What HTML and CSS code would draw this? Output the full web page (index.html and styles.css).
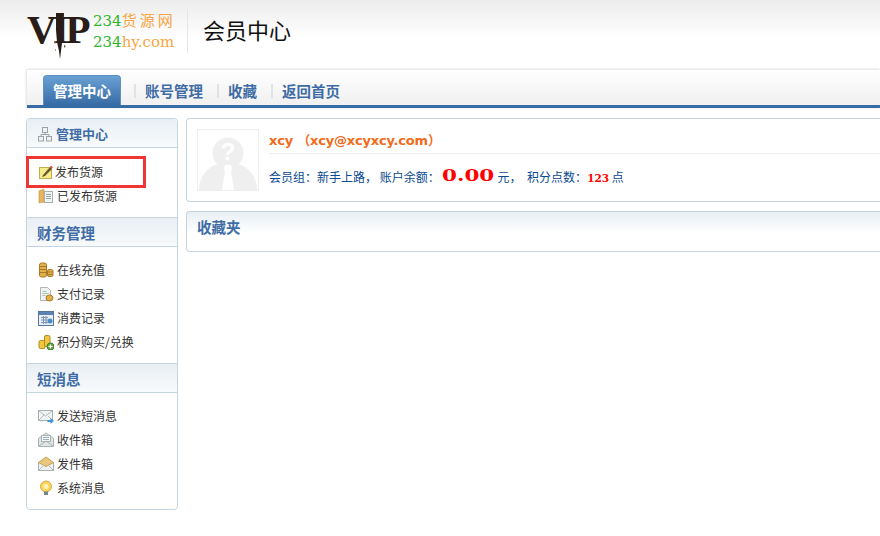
FILE: index.html
```html
<!DOCTYPE html>
<html lang="zh">
<head>
<meta charset="utf-8">
<title>会员中心</title>
<link rel="stylesheet" href="styles.css">
</head>
<body>
<header class="top">
  <div class="logo">
    <span class="vip">VIP</span>
    <svg class="vip-stem" viewBox="0 0 12 48" width="12" height="48"><path d="M2 2h8l-1 24-1 6-1 8-1 8-1-8-2-9-1-12z" fill="#2a1c18"/><path d="M0 30l2 1-1 2zM10 34l2 1-2 2zM1 38l1 1-1 1z" fill="#6b5a52"/></svg>
    <div class="site">
      <div class="site-a"><span class="green">234</span><span class="orange wide">货源网</span></div>
      <div class="site-b"><span class="green">234</span><span class="orange">hy.com</span></div>
    </div>
  </div>
  <h1 class="title">会员中心</h1>
</header>

<nav class="tabs">
  <a class="tab active">管理中心</a>
  <span class="sep"></span><a class="tab">账号管理</a>
  <span class="sep"></span><a class="tab">收藏</a>
  <span class="sep"></span><a class="tab">返回首页</a>
</nav>

<div class="layout">
  <aside class="side">
    <div class="side-head first">
      <svg class="hicon" viewBox="0 0 16 16" width="16" height="16"><g fill="#eef1f3" stroke="#9aa3a8"><rect x="5.500" y="1.500" width="5" height="5"/><rect x="1.500" y="10.500" width="5" height="4.500"/><rect x="9.500" y="10.500" width="5" height="4.500"/><path d="M8 6.500v2M4 10.500v-2h8v2" fill="none"/></g></svg>
      管理中心
    </div>
    <ul class="menu tight">
      <li>
        <svg class="ico" viewBox="0 0 16 16" width="16" height="16"><rect x="1.500" y="3.500" width="12" height="11" fill="#f6ec8c" stroke="#c2ad50"/><path d="M5 11l7-8 2 2-7 7-3 1z" fill="#6b5a2a"/><path d="M12 3l1-1.500 2 2-1 1z" fill="#e0524a"/></svg>
        发布货源
      </li>
      <li>
        <svg class="ico" viewBox="0 0 16 16" width="16" height="16"><path d="M1 3l5-2v13l-5 1z" fill="#e5b65c" stroke="#c59340" stroke-width=".6"/><rect x="6.500" y="3.500" width="8" height="11" fill="#f2f4f4" stroke="#a9b0b4"/><path d="M8 6.500h5M8 8.500h5M8 10.500h5" stroke="#99a3a8"/></svg>
        已发布货源
      </li>
    </ul>

    <div class="side-head">财务管理</div>
    <ul class="menu">
      <li>
        <svg class="ico" viewBox="0 0 16 16" width="16" height="16"><rect x="1.500" y="1" width="7" height="14" rx="2" fill="#e2b04a" stroke="#a87a26"/><path d="M2 4.500h6M2 7.500h6M2 10.500h6" stroke="#a87a26"/><rect x="9.500" y="7.500" width="5.500" height="7" rx="1.500" fill="#e2b04a" stroke="#a87a26"/><path d="M10 10h4.500M10 12.500h4.500" stroke="#a87a26"/></svg>
        在线充值
      </li>
      <li>
        <svg class="ico" viewBox="0 0 16 16" width="16" height="16"><path d="M2.500 1.500h7l3 3v10h-10z" fill="#eef2f1" stroke="#aeb8ba"/><path d="M4.500 5.500h4M4.500 7.500h6M4.500 9.500h3" stroke="#a9c2b6"/><ellipse cx="11.500" cy="12" rx="3.500" ry="3" fill="#e2b04a" stroke="#a87a26"/></svg>
        支付记录
      </li>
      <li>
        <svg class="ico" viewBox="0 0 16 16" width="16" height="16"><rect x=".5" y="1.500" width="15" height="14" fill="#e8eef4" stroke="#56779c"/><rect x="1" y="2" width="14" height="3" fill="#5b84b5"/><path d="M3 7.500h7M3 10h7M3 12.500h7M5.500 6v8M8 6v8" stroke="#7f95ad"/><circle cx="12" cy="11" r="2.500" fill="#4b8cc4"/></svg>
        消费记录
      </li>
      <li>
        <svg class="ico" viewBox="0 0 16 16" width="16" height="16"><rect x="1" y="6.500" width="6" height="8" rx="1.500" fill="#f0c840" stroke="#b08a20"/><rect x="6.500" y="1.500" width="5.500" height="11" rx="1.500" fill="#f0c840" stroke="#b08a20"/><circle cx="12.500" cy="12.500" r="3.500" fill="#6aa84f" stroke="#3f7a30"/><path d="M12.500 10.500v4M10.500 12.500h4" stroke="#fff"/></svg>
        积分购买/兑换
      </li>
    </ul>

    <div class="side-head">短消息</div>
    <ul class="menu">
      <li>
        <svg class="ico" viewBox="0 0 16 16" width="16" height="16"><rect x=".5" y="2.500" width="14" height="10" fill="#f0f3f3" stroke="#a8b2b2"/><path d="M1 3l6.500 5L14 3M1 12l5-5M14 12l-4-4" fill="none" stroke="#b4bdbd"/><path d="M9.500 12h3v-2l3.500 3-3.500 3v-2h-3z" fill="#3f93d6"/></svg>
        发送短消息
      </li>
      <li>
        <svg class="ico" viewBox="0 0 16 16" width="16" height="16"><path d="M.5 6.500v8h15v-8L8 1z" fill="#dfe6e4" stroke="#a8b2b2"/><rect x="3.500" y="3.500" width="9" height="6" fill="#f6f8f8" stroke="#a8b2b2"/><path d="M5 5.500h6M5 7.500h6" stroke="#9bb0bb"/><path d="M1 14l7-5 7 5" fill="none" stroke="#a8b2b2"/></svg>
        收件箱
      </li>
      <li>
        <svg class="ico" viewBox="0 0 16 16" width="16" height="16"><rect x=".5" y="6.500" width="15" height="8" fill="#eef1f1" stroke="#a8b2b2"/><path d="M.5 6.500L8 1l7.500 5.500L8 10.500z" fill="#e9c77f" stroke="#c9a050"/><path d="M1 14l5-5M15 14l-5-5" stroke="#b4bdbd"/></svg>
        发件箱
      </li>
      <li>
        <svg class="ico" viewBox="0 0 16 16" width="16" height="16"><circle cx="8" cy="6.500" r="5.500" fill="#fbd65c" stroke="#d9a94a"/><circle cx="8" cy="6.500" r="2.500" fill="#fff3b8"/><rect x="6" y="11.500" width="4" height="3.500" fill="#7d8487"/></svg>
        系统消息
      </li>
    </ul>
  </aside>

  <main class="main">
    <section class="panel profile">
      <div class="avatar">
        <svg viewBox="0 0 60 60" width="60" height="60"><circle cx="30" cy="23" r="15.500" fill="#efefef"/><path d="M1 60c0-16 12-25 20-26h18c8 1 20 10 20 26z" fill="#efefef"/><path d="M27 35h6l1 3-1 4 3 18H24l3-18-1-4z" fill="#fff"/><text x="30" y="30" class="qmark">?</text></svg>
      </div>
      <div class="info">
        <div class="name">xcy （xcy@xcyxcy.com）</div>
        <div class="stats">会员组：新手上路， 账户余额：<b class="money">0.00</b> <span class="unit">元，</span> 积分点数：<b class="points">123</b> 点</div>
      </div>
    </section>
    <section class="panel fav">收藏夹</section>
  </main>
</div>

<div class="highlight"></div>
</body>
</html>
```

FILE: styles.css
```css
* { box-sizing: border-box; }
html, body { margin: 0; padding: 0; background: #fff; }
body {
  height: 536px;
  position: relative;
  font: 12px/16px "Noto Sans CJK SC", "Liberation Sans", sans-serif;
  color: #333;
}

/* header */
.top {
  height: 70px;
  padding: 10px 0 0 27px;
  display: flex;
  align-items: flex-start;
  background: linear-gradient(#ececec, #fff 55%);
}
.logo {
  position: relative;
  display: flex;
  width: 161px;
  height: 44px;
  border-right: 1px solid #e6e6e6;
  margin-top: -1px;
}
.vip {
  font: bold 41px/40px "Liberation Serif", serif;
  color: #2a1c18;
  letter-spacing: -3.500px;
  width: 66px;
  flex: none;
}
.vip-stem { position: absolute; left: 27px; top: 2px; }
.site { font-family: "DejaVu Serif", serif; font-size: 15px; line-height: 20px; padding-top: 1px; }
.site-b { margin-top: 1px; }
.green { color: #2fb52c; }
.orange { color: #f7a544; }
.wide { letter-spacing: 3px; font-family: "Noto Sans CJK SC", sans-serif; font-size: 15px; }
.title {
  margin: 5px 0 0 15px;
  font-size: 22px;
  line-height: 28px;
  font-weight: 400;
  color: #111;
}

/* tabs */
.tabs {
  margin-left: 27px;
  height: 38px;
  padding: 5px 0 0 16px;
  display: flex;
  align-items: flex-start;
  background: linear-gradient(#fff, #f0f0f0);
  border-bottom: 3px solid #376ba5;
  box-shadow: 0 -1px 2px #e4e4e4, -1px 0 2px #e4e4e4;
}
.tab {
  display: block;
  height: 30px;
  padding: 0 14px 0 9px;
  font-size: 14.500px;
  font-weight: 700;
  line-height: 31px;
  color: #3f6ca5;
}
.tab.active {
  width: 78px;
  padding: 0;
  text-align: center;
  color: #fff;
  background: linear-gradient(#69a1d4, #376ba5);
  border: 1px solid #5d90c4;
  border-bottom: 0;
  border-radius: 4px 4px 0 0;
  line-height: 29px;
  margin-right: 13px;
}
.sep { width: 2px; height: 14px; margin-top: 9px; background: #e2e2e2; }

/* layout */
.layout {
  display: flex;
  gap: 8px;
  margin: 10px 0 0 26px;
  align-items: flex-start;
}

/* side */
.side {
  width: 152px;
  height: 392px;
  flex: none;
  border: 1px solid #c5d5e0;
  border-radius: 4px;
  background: #fff;
}
.side-head {
  height: 30px;
  padding: 1px 0 0 10px;
  display: flex;
  align-items: center;
  gap: 3px;
  font-size: 14.500px;
  font-weight: 700;
  color: #3f6ca5;
  background: linear-gradient(#e8eff4, #f8fafb);
  border-top: 1px solid #c5d5e0;
  border-bottom: 1px solid #c5d5e0;
}
.side-head.first { border-top: 0; border-radius: 3px 3px 0 0; height: 29px; font-size: 13px; }
.hicon { flex: none; }
.menu { list-style: none; margin: 0; padding: 11px 0 9px 11px; }
.menu.tight { padding-top: 12px; }
.menu li {
  height: 24px;
  display: flex;
  align-items: center;
  gap: 3px;
  color: #333;
}
.menu.tight li:first-child { gap: 1px; }
.ico { flex: none; }

/* main */
.main { flex: 1; min-width: 0; display: flex; flex-direction: column; gap: 9px; }
.panel {
  border: 1px solid #c5d5e0;
  border-right: 0;
  border-radius: 4px 0 0 4px;
  background: #fff;
}
.profile { height: 84px; padding: 10px 0 0 10px; display: flex; gap: 10px; }
.avatar { width: 62px; height: 62px; border: 1px solid #eee; flex: none; }
.avatar svg { display: block; }
.qmark { font: bold 24px "Liberation Sans", sans-serif; fill: #fff; text-anchor: middle; }
.info { flex: 1; min-width: 0; }
.name {
  height: 25px;
  padding-top: 3px;
  border-bottom: 1px solid #eee;
  font: bold 13px/18px "DejaVu Sans", "Noto Sans CJK SC", sans-serif;
  letter-spacing: -.2px;
  color: #f26a1b;
}
.stats {
  margin-top: 11px;
  line-height: 24px;
  color: #0a4a8f;
  white-space: nowrap;
}
.money {
  display: inline-block;
  width: 52px;
  margin: -1px 0 0 2px;
  font: bold 16.500px/24px "DejaVu Serif", serif;
  color: #f00;
  transform: scaleX(1.3);
  transform-origin: left center;
  vertical-align: top;
}
.unit { margin: 0 3px 0 1px; }
.points { font: bold 10.500px/16px "DejaVu Serif", serif; color: #f00; }
.fav {
  height: 41px;
  padding: 5px 0 0 10px;
  font-size: 14.500px;
  font-weight: 700;
  line-height: 20px;
  color: #3f6ca5;
  background: linear-gradient(#e8eff4, #fff 55%);
}

/* annotation */
.highlight {
  position: absolute;
  left: 26px;
  top: 156px;
  width: 120px;
  height: 32px;
  border: 3px solid #f03535;
}
```
